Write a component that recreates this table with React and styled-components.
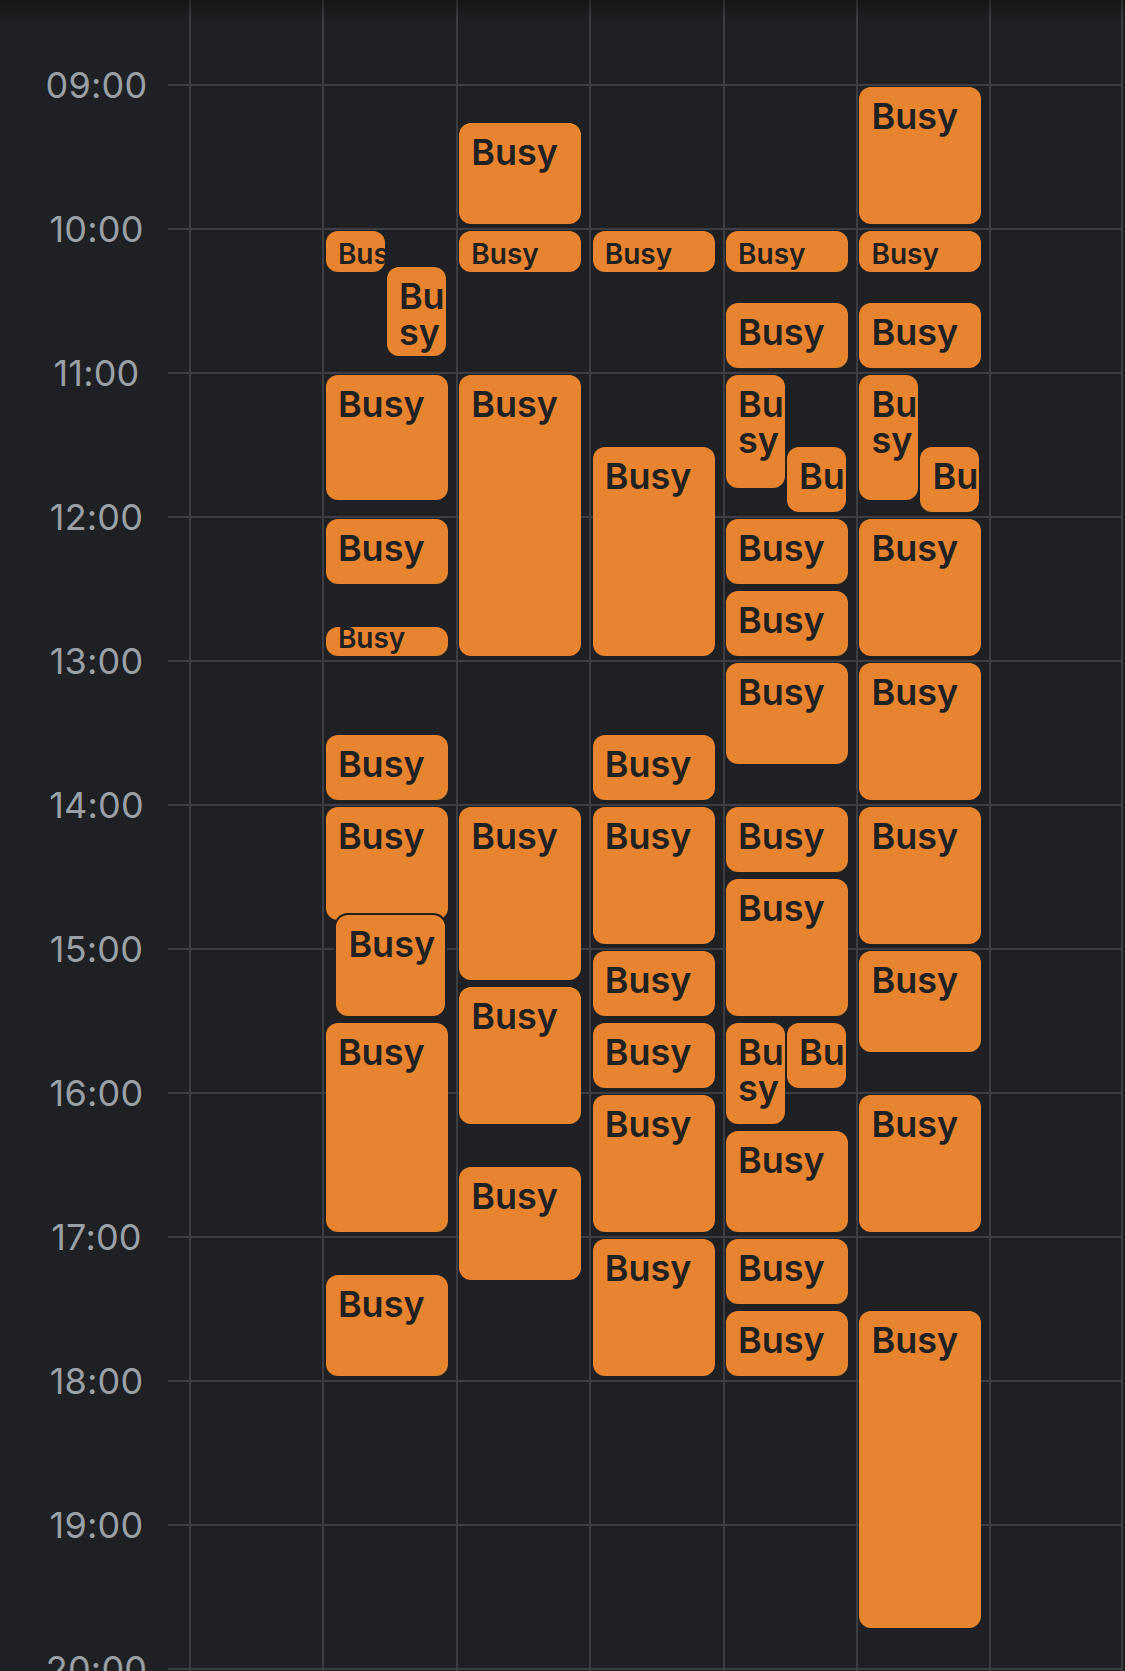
import React from 'react';
import styled, { createGlobalStyle, css } from 'styled-components';

const HOUR = 144;
const PX_PER_MIN = HOUR / 60;
const FIRST_LINE = 84; // top of the 09:00 grid line
const START_HOUR = 9;
const HOURS = [9, 10, 11, 12, 13, 14, 15, 16, 17, 18, 19, 20];
const USABLE = 122; // usable event width inside a day column

const BG = '#1f2023';
const LINE = '#3b3f43';
const ORANGE = '#e8842f';

const GlobalStyle = createGlobalStyle`
  html, body {
    margin: 0;
    padding: 0;
    background: ${BG};
  }
  body {
    font-family: Inter, "Noto Sans", "Liberation Sans", sans-serif;
    -webkit-font-smoothing: antialiased;
  }
`;

const Screen = styled.div`
  position: relative;
  width: 1125px;
  height: 1671px;
  overflow: hidden;
  background: ${BG};
  display: grid;
  grid-template-columns: 189px repeat(7, 133.4px);

  &::before {
    content: '';
    position: absolute;
    top: 0;
    left: 0;
    right: 0;
    height: 22px;
    background: linear-gradient(rgba(0, 0, 0, 0.32), rgba(0, 0, 0, 0));
    z-index: 5;
    pointer-events: none;
  }
`;

const Gutter = styled.div`
  display: flex;
  flex-direction: column;
`;

const Spacer = styled.div`
  flex: 0 0 ${FIRST_LINE}px;
`;

const HourLabelRow = styled.div`
  position: relative;
  flex: 0 0 ${HOUR}px;

  &::after {
    content: '';
    position: absolute;
    top: 0;
    right: 0;
    width: 21px;
    height: 2px;
    background: ${LINE};
  }
`;

const TimeLabel = styled.span`
  display: block;
  margin-top: -17px;
  padding-left: 4px;
  font-size: 36px;
  line-height: 36px;
  font-weight: 400;
  color: #9aa0a6;
  text-align: center;
  letter-spacing: 0.2px;
`;

const DayColumn = styled.div`
  position: relative;
  display: flex;
  flex-direction: column;
  border-left: 2px solid ${LINE};
  ${(p) =>
    p.$last &&
    css`
      border-right: 2px solid ${LINE};
    `}
`;

const HourCell = styled.div`
  flex: 0 0 ${HOUR}px;
  box-sizing: border-box;
  border-top: 2px solid ${LINE};
`;

const EventCard = styled.div`
  position: absolute;
  box-sizing: border-box;
  background: ${ORANGE};
  border-radius: 12px;
  padding: 11px 0 0 12px;
  overflow: hidden;
  color: #212121;
  font-weight: 600;
  font-size: 36px;
  line-height: 1;
  white-space: ${(p) => (p.$wrap ? 'normal' : 'nowrap')};
  word-break: break-all;
  z-index: 1;
  ${(p) =>
    p.$small &&
    css`
      display: flex;
      align-items: flex-end;
      padding: 0 0 4px 12px;
      font-size: 28px;
    `}
  ${(p) =>
    p.$nested &&
    css`
      box-shadow: 0 0 0 2px ${BG};
      z-index: 2;
    `}
`;

// [start, end, slot, slots, nested]
const DAYS = [
  [],
  [
    ['10:00', '10:20', 0, 2],
    ['10:15', '10:55', 1, 2],
    ['11:00', '11:55'],
    ['12:00', '12:30'],
    ['12:45', '13:00'],
    ['13:30', '14:00'],
    ['14:00', '14:50'],
    ['14:45', '15:30', 0, 1, true],
    ['15:30', '17:00'],
    ['17:15', '18:00'],
  ],
  [
    ['09:15', '10:00'],
    ['10:00', '10:20'],
    ['11:00', '13:00'],
    ['14:00', '15:15'],
    ['15:15', '16:15'],
    ['16:30', '17:20'],
  ],
  [
    ['10:00', '10:20'],
    ['11:30', '13:00'],
    ['13:30', '14:00'],
    ['14:00', '15:00'],
    ['15:00', '15:30'],
    ['15:30', '16:00'],
    ['16:00', '17:00'],
    ['17:00', '18:00'],
  ],
  [
    ['10:00', '10:20'],
    ['10:30', '11:00'],
    ['11:00', '11:50', 0, 2],
    ['11:30', '12:00', 1, 2],
    ['12:00', '12:30'],
    ['12:30', '13:00'],
    ['13:00', '13:45'],
    ['14:00', '14:30'],
    ['14:30', '15:30'],
    ['15:30', '16:15', 0, 2],
    ['15:30', '16:00', 1, 2],
    ['16:15', '17:00'],
    ['17:00', '17:30'],
    ['17:30', '18:00'],
  ],
  [
    ['09:00', '10:00'],
    ['10:00', '10:20'],
    ['10:30', '11:00'],
    ['11:00', '11:55', 0, 2],
    ['11:30', '12:00', 1, 2],
    ['12:00', '13:00'],
    ['13:00', '14:00'],
    ['14:00', '15:00'],
    ['15:00', '15:45'],
    ['16:00', '17:00'],
    ['17:30', '19:45'],
  ],
  [],
];

const toMin = (t) => {
  const [h, m] = t.split(':').map(Number);
  return (h - START_HOUR) * 60 + m;
};

const pad = (h) => (h < 10 ? `0${h}` : `${h}`);

function Event({ ev }) {
  const [start, end, slot = 0, slots = 1, nested = false] = ev;
  const s = toMin(start);
  const e = toMin(end);
  const dur = e - s;
  const top = FIRST_LINE + 1 + s * PX_PER_MIN + 2;
  const height = dur * PX_PER_MIN - 7;
  let left;
  let width;
  if (nested) {
    left = 12;
    width = USABLE - 13.5;
  } else {
    const slotW = USABLE / slots;
    left = 1.5 + slot * slotW;
    width = slots > 1 ? slotW - 2 : USABLE;
  }
  return (
    <EventCard
      $small={dur <= 20}
      $wrap={dur >= 40}
      $nested={nested}
      style={{ top, height, left, width }}
    >
      Busy
    </EventCard>
  );
}

export default function App() {
  return (
    <>
      <GlobalStyle />
      <Screen>
        <Gutter>
          <Spacer />
          {HOURS.map((h) => (
            <HourLabelRow key={h}>
              <TimeLabel>{pad(h)}:00</TimeLabel>
            </HourLabelRow>
          ))}
        </Gutter>
        {DAYS.map((events, i) => (
          <DayColumn key={i} $last={i === DAYS.length - 1}>
            <Spacer />
            {HOURS.map((h) => (
              <HourCell key={h} />
            ))}
            {events.map((ev, j) => (
              <Event key={j} ev={ev} />
            ))}
          </DayColumn>
        ))}
      </Screen>
    </>
  );
}
